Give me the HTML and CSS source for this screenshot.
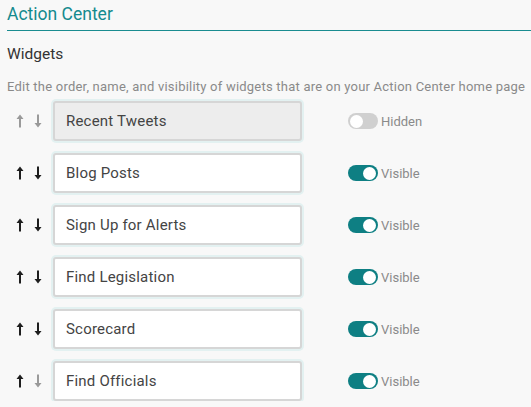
FILE: index.html
```html
<!DOCTYPE html>
<html>
<head>
<meta charset="utf-8">
<link rel="stylesheet" href="styles.css">
</head>
<body>
<div class="page">
  <h1 class="title">Action Center</h1>
  <h2 class="section">Widgets</h2>
  <p class="desc">Edit the order, name, and visibility of widgets that are on your Action Center home page</p>
  <div class="rows">
    <div class="row">
      <div class="arrows">
        <svg class="arrow off" width="8" height="14" viewBox="0 0 8 14"><path d="M4 0.5 L7.5 5 L5 5 L5 13.5 L3 13.5 L3 5 L0.5 5 Z"/></svg>
        <svg class="arrow off" width="8" height="14" viewBox="0 0 8 14"><path d="M4 13.5 L7.5 9 L5 9 L5 0.5 L3 0.5 L3 9 L0.5 9 Z"/></svg>
      </div>
      <div class="field disabled">Recent Tweets</div>
      <div class="vis"><span class="toggle"><span class="knob"></span></span><span class="lbl">Hidden</span></div>
    </div>
    <div class="row">
      <div class="arrows">
        <svg class="arrow" width="8" height="14" viewBox="0 0 8 14"><path d="M4 0.5 L7.5 5 L5 5 L5 13.5 L3 13.5 L3 5 L0.5 5 Z"/></svg>
        <svg class="arrow" width="8" height="14" viewBox="0 0 8 14"><path d="M4 13.5 L7.5 9 L5 9 L5 0.5 L3 0.5 L3 9 L0.5 9 Z"/></svg>
      </div>
      <div class="field">Blog Posts</div>
      <div class="vis"><span class="toggle on"><span class="knob"></span></span><span class="lbl">Visible</span></div>
    </div>
    <div class="row">
      <div class="arrows">
        <svg class="arrow" width="8" height="14" viewBox="0 0 8 14"><path d="M4 0.5 L7.5 5 L5 5 L5 13.5 L3 13.5 L3 5 L0.5 5 Z"/></svg>
        <svg class="arrow" width="8" height="14" viewBox="0 0 8 14"><path d="M4 13.5 L7.5 9 L5 9 L5 0.5 L3 0.5 L3 9 L0.5 9 Z"/></svg>
      </div>
      <div class="field">Sign Up for Alerts</div>
      <div class="vis"><span class="toggle on"><span class="knob"></span></span><span class="lbl">Visible</span></div>
    </div>
    <div class="row">
      <div class="arrows">
        <svg class="arrow" width="8" height="14" viewBox="0 0 8 14"><path d="M4 0.5 L7.5 5 L5 5 L5 13.5 L3 13.5 L3 5 L0.5 5 Z"/></svg>
        <svg class="arrow" width="8" height="14" viewBox="0 0 8 14"><path d="M4 13.5 L7.5 9 L5 9 L5 0.5 L3 0.5 L3 9 L0.5 9 Z"/></svg>
      </div>
      <div class="field">Find Legislation</div>
      <div class="vis"><span class="toggle on"><span class="knob"></span></span><span class="lbl">Visible</span></div>
    </div>
    <div class="row">
      <div class="arrows">
        <svg class="arrow" width="8" height="14" viewBox="0 0 8 14"><path d="M4 0.5 L7.5 5 L5 5 L5 13.5 L3 13.5 L3 5 L0.5 5 Z"/></svg>
        <svg class="arrow" width="8" height="14" viewBox="0 0 8 14"><path d="M4 13.5 L7.5 9 L5 9 L5 0.5 L3 0.5 L3 9 L0.5 9 Z"/></svg>
      </div>
      <div class="field">Scorecard</div>
      <div class="vis"><span class="toggle on"><span class="knob"></span></span><span class="lbl">Visible</span></div>
    </div>
    <div class="row">
      <div class="arrows">
        <svg class="arrow" width="8" height="14" viewBox="0 0 8 14"><path d="M4 0.5 L7.5 5 L5 5 L5 13.5 L3 13.5 L3 5 L0.5 5 Z"/></svg>
        <svg class="arrow off" width="8" height="14" viewBox="0 0 8 14"><path d="M4 13.5 L7.5 9 L5 9 L5 0.5 L3 0.5 L3 9 L0.5 9 Z"/></svg>
      </div>
      <div class="field">Find Officials</div>
      <div class="vis"><span class="toggle on"><span class="knob"></span></span><span class="lbl">Visible</span></div>
    </div>
  </div>
</div>
</body>
</html>
```

FILE: styles.css
```css
html, body {
  margin: 0;
  padding: 0;
  background: #f8f8f8;
}
body {
  font-family: Roboto, "Liberation Sans", sans-serif;
  color: #333;
}
.page {
  padding: 3px 0 0 7px;
}
.title {
  margin: 0;
  font-size: 17.5px;
  font-weight: 400;
  color: #138a8e;
  line-height: 22px;
  padding-bottom: 5px;
  border-bottom: 1px solid #1a8c90;
}
.section {
  margin: 14px 0 0 0;
  font-size: 15.5px;
  font-weight: 400;
  color: #333;
  line-height: 18px;
}
.desc {
  margin: 16px 0 0 0;
  font-size: 13px;
  letter-spacing: 0.22px;
  color: #8a8a8a;
  line-height: 16px;
  white-space: nowrap;
}
.rows {
  margin-top: 6px;
  display: flex;
  flex-direction: column;
  gap: 12px;
}
.row {
  display: flex;
  align-items: center;
  height: 40px;
}
.arrows {
  width: 46px;
  display: flex;
  gap: 10px;
  padding-left: 9px;
  box-sizing: border-box;
}
.arrow {
  fill: #1e1e1e;
  display: block;
}
.arrow.off {
  fill: #9a9a9a;
}
.field {
  width: 249px;
  height: 40px;
  box-sizing: border-box;
  border: 2px solid #d6d6d6;
  border-radius: 3px;
  background: #fff;
  box-shadow: 0 0 0 2px #e3f1f1;
  font-size: 15px;
  letter-spacing: 0.2px;
  color: #444;
  display: flex;
  align-items: center;
  padding-left: 11px;
}
.field.disabled {
  background: #ededed;
}
.vis {
  display: flex;
  align-items: center;
  margin-left: 46px;
}
.toggle {
  width: 30px;
  height: 16px;
  border-radius: 8px;
  background: #d0d0d0;
  position: relative;
  box-sizing: border-box;
}
.toggle .knob {
  position: absolute;
  top: 1.5px;
  left: 2px;
  width: 13px;
  height: 13px;
  border-radius: 50%;
  background: #fff;
}
.toggle.on {
  background: #0e7f83;
}
.toggle.on .knob {
  left: auto;
  right: 2px;
}
.lbl {
  margin-left: 3px;
  font-size: 13px;
  color: #8a8a8a;
}
```
